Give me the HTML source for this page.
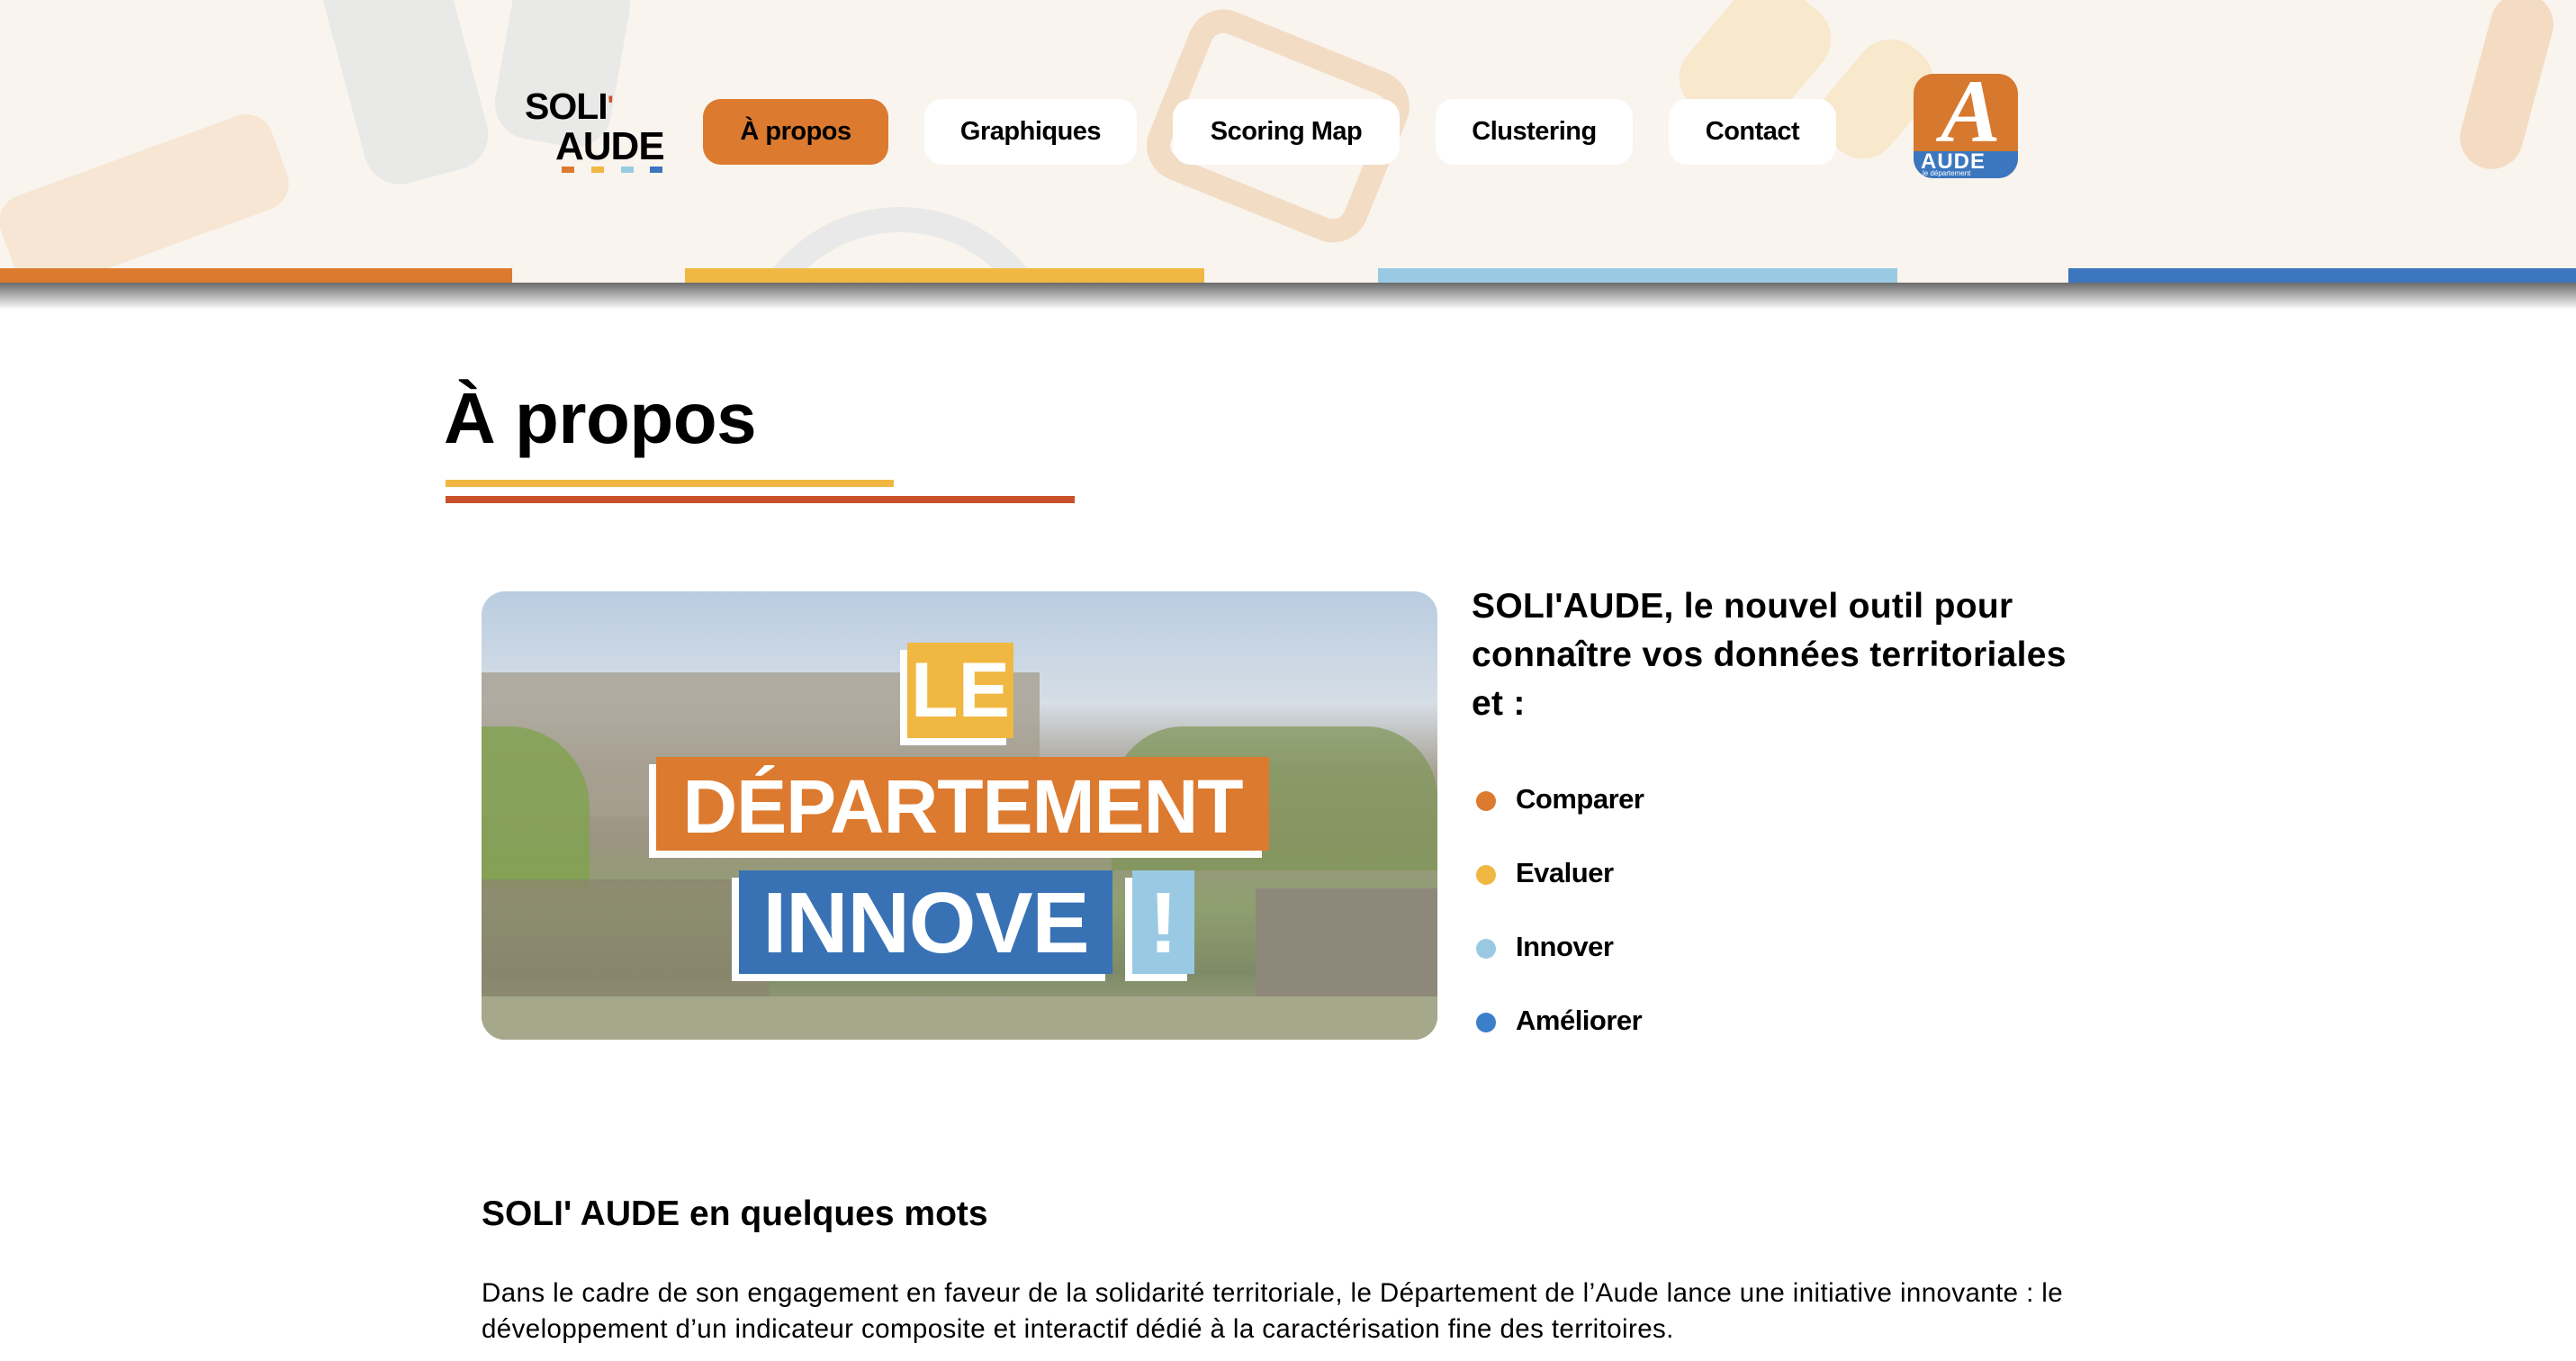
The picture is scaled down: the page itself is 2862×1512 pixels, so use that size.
<!DOCTYPE html>
<html><head><meta charset="utf-8">
<style>
*{margin:0;padding:0;box-sizing:border-box}
body{width:2862px;height:1512px;overflow:hidden;background:#fff;font-family:"Liberation Sans",sans-serif;color:#000;position:relative}
.hdr{position:absolute;left:0;top:0;width:2862px;height:314px;background:#F9F4EE;overflow:hidden}
.deco{position:absolute;border-radius:40px}
.bar{position:absolute;top:298px;height:16px}
.shadow{position:absolute;left:0;top:314px;width:2862px;height:30px;background:linear-gradient(#6b6b6b,#fff)}
.btn{position:absolute;top:110px;height:73px;border-radius:20px;background:#fff;font-weight:bold;font-size:29px;display:flex;align-items:center;justify-content:center;letter-spacing:-0.5px}
.abs{position:absolute}
.dot{position:absolute;left:1640px;width:22px;height:22px;border-radius:50%}
.li{position:absolute;left:1684px;font-weight:bold;font-size:31px;letter-spacing:-0.5px}
</style></head><body>
<div class="hdr">
  <div class="deco" style="left:380px;top:-60px;width:140px;height:260px;background:#E3E4E6;transform:rotate(-15deg);opacity:.7"></div>
  <div class="deco" style="left:560px;top:-40px;width:130px;height:200px;background:#E3E4E6;transform:rotate(10deg);opacity:.7"></div>
  <div class="deco" style="left:0px;top:170px;width:320px;height:110px;background:#F4DCC2;transform:rotate(-20deg);opacity:.6;border-radius:30px"></div>
  <div class="deco" style="left:1290px;top:40px;width:260px;height:200px;border:26px solid #F2DCC4;background:transparent;transform:rotate(22deg)"></div>
  <div class="deco" style="left:1890px;top:-20px;width:120px;height:170px;background:#F8E8CC;transform:rotate(40deg)"></div>
  <div class="deco" style="left:2040px;top:40px;width:90px;height:140px;background:#F8E8CC;transform:rotate(40deg)"></div>
  <div class="deco" style="left:820px;top:230px;width:360px;height:180px;border:28px solid #E8E9E8;background:transparent;border-radius:180px 180px 0 0"></div>
  <div class="deco" style="left:2750px;top:-10px;width:70px;height:200px;background:#F4DCC2;transform:rotate(15deg)"></div>
  <div class="bar" style="left:0;width:569px;background:#DC7A2F"></div>
  <div class="bar" style="left:761px;width:577px;background:#F0B842"></div>
  <div class="bar" style="left:1531px;width:577px;background:#9ACAE3"></div>
  <div class="bar" style="left:2298px;width:564px;background:#3B76BE"></div>
  <div class="abs" style="left:583px;top:96px;font-weight:bold;font-size:41px;line-height:44px;letter-spacing:-1px">SOLI<span style="color:#C8502B;font-size:30px;vertical-align:top">'</span></div>
  <div class="abs" style="left:617px;top:140px;font-weight:bold;font-size:44px;line-height:46px;letter-spacing:-1px">AUDE</div>
  <div class="abs" style="left:624px;top:185px;width:14px;height:7px;background:#DC7A2F"></div>
  <div class="abs" style="left:657px;top:185px;width:14px;height:7px;background:#F0B842"></div>
  <div class="abs" style="left:690px;top:185px;width:14px;height:7px;background:#9ACAE3"></div>
  <div class="abs" style="left:722px;top:185px;width:14px;height:7px;background:#3B76BE"></div>
  <div class="btn" style="left:781px;width:206px;background:#DC7A2F">À propos</div>
  <div class="btn" style="left:1027px;width:236px">Graphiques</div>
  <div class="btn" style="left:1303px;width:252px">Scoring Map</div>
  <div class="btn" style="left:1595px;width:219px">Clustering</div>
  <div class="btn" style="left:1854px;width:186px">Contact</div>
  <div class="abs" style="left:2126px;top:82px;width:116px;height:116px;border-radius:22px;overflow:hidden;background:#D6782E">
    <div class="abs" style="left:0;top:86px;width:116px;height:30px;background:#3B76BE"></div>
    <div class="abs" style="left:30px;top:-8px;font-family:'Liberation Serif',serif;font-style:italic;font-weight:bold;font-size:100px;color:#fff;line-height:100px">A</div>
    <div class="abs" style="left:8px;top:84px;font-weight:bold;font-size:24px;color:#fff;letter-spacing:1px">AUDE</div>
    <div class="abs" style="left:10px;top:106px;font-size:8px;color:#fff">le département</div>
  </div>
</div>
<div class="shadow"></div>

<div class="abs" style="left:493px;top:415px;font-weight:bold;font-size:80px;line-height:100px;letter-spacing:-0.5px">À propos</div>
<div class="abs" style="left:495px;top:533px;width:498px;height:8px;background:#F0B842"></div>
<div class="abs" style="left:495px;top:551px;width:699px;height:8px;background:#C8502B"></div>

<div class="abs" style="left:535px;top:657px;width:1062px;height:498px;border-radius:26px;overflow:hidden;background:linear-gradient(#B9CCE0 0%,#D6DEE6 25%,#A8A194 40%,#9C9482 55%,#8FA070 70%,#7E8A66 85%,#A9AC8C 100%)">
  <div class="abs" style="left:0;top:90px;width:620px;height:160px;background:#A69F90;opacity:.8"></div>
  <div class="abs" style="left:700px;top:150px;width:362px;height:160px;background:#7E9656;opacity:.7;border-radius:80px 80px 0 0"></div>
  <div class="abs" style="left:0;top:150px;width:120px;height:180px;background:#7FA24E;opacity:.8;border-radius:0 90px 0 0"></div>
  <div class="abs" style="left:860px;top:330px;width:202px;height:168px;background:#8E887A"></div>
  <div class="abs" style="left:0;top:320px;width:320px;height:178px;background:#8C8470;opacity:.7"></div>
  <div class="abs" style="left:0;top:450px;width:1062px;height:48px;background:#A5A88A"></div>
  <div class="abs" style="left:465px;top:65px;width:118px;height:106px;background:#fff"></div>
  <div class="abs" style="left:473px;top:57px;width:118px;height:106px;background:#F0B842;color:#fff;font-weight:bold;font-size:86px;line-height:106px;text-align:center">LE</div>
  <div class="abs" style="left:186px;top:192px;width:681px;height:104px;background:#fff"></div>
  <div class="abs" style="left:194px;top:184px;width:681px;height:104px;background:#DC7A2F;color:#fff;font-weight:bold;font-size:84px;line-height:110px;text-align:center;letter-spacing:-1px">DÉPARTEMENT</div>
  <div class="abs" style="left:278px;top:318px;width:415px;height:115px;background:#fff"></div>
  <div class="abs" style="left:286px;top:310px;width:415px;height:115px;background:#3872B5;color:#fff;font-weight:bold;font-size:96px;line-height:118px;text-align:center;letter-spacing:-1px">INNOVE</div>
  <div class="abs" style="left:715px;top:318px;width:69px;height:115px;background:#fff"></div>
  <div class="abs" style="left:723px;top:310px;width:69px;height:115px;background:#9ACAE3;color:#fff;font-weight:bold;font-size:96px;line-height:118px;text-align:center">!</div>
</div>

<div class="abs" style="left:1635px;top:647px;font-weight:bold;font-size:39px;line-height:54px;letter-spacing:0.3px">SOLI'AUDE, le nouvel outil pour<br>connaître vos données territoriales<br>et :</div>

<div class="dot" style="top:879px;background:#DC7A2F"></div><div class="li" style="top:870px">Comparer</div>
<div class="dot" style="top:961px;background:#F0B842"></div><div class="li" style="top:952px">Evaluer</div>
<div class="dot" style="top:1043px;background:#9ACAE3"></div><div class="li" style="top:1034px">Innover</div>
<div class="dot" style="top:1125px;background:#3B7FCB"></div><div class="li" style="top:1116px">Améliorer</div>

<div class="abs" style="left:535px;top:1327px;font-weight:bold;font-size:39px;letter-spacing:0">SOLI' AUDE en quelques mots</div>
<div class="abs" style="left:535px;top:1417px;font-size:29.5px;line-height:40px;white-space:nowrap;letter-spacing:0.4px">Dans le cadre de son engagement en faveur de la solidarité territoriale, le Département de l’Aude lance une initiative innovante : le<br>développement d’un indicateur composite et interactif dédié à la caractérisation fine des territoires.</div>
</body></html>
